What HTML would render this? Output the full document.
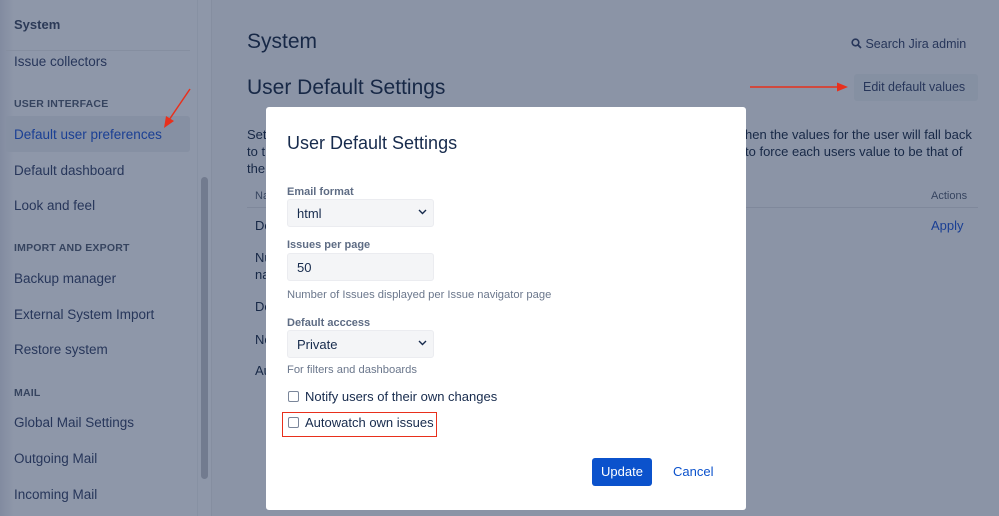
<!DOCTYPE html>
<html><head><meta charset="utf-8"><style>
*{box-sizing:border-box;margin:0;padding:0}
body{width:999px;height:516px;overflow:hidden;font-family:"Liberation Sans",sans-serif;background:#8b94a6;position:relative;color:#253858}
.side{position:absolute;left:0;top:0;width:212px;height:516px;background:linear-gradient(90deg,#828ba0 0,#8e97a9 14px,#8e97a9 100%);border-right:1px solid #858ea0}
.side .t{position:absolute;left:14px;font-size:13px;font-weight:bold;color:#2c3a57}
.side .i{position:absolute;left:14px;font-size:13.5px;color:#27365a}
.side .h{position:absolute;left:14px;font-size:10.5px;font-weight:bold;color:#36445f;letter-spacing:.2px}
.sel{position:absolute;left:6px;top:116px;width:184px;height:36px;background:#8690a3;border-radius:3px}
.abs{position:absolute}
.modal{position:absolute;left:266px;top:107px;width:480px;height:403px;background:#fff;border-radius:3px}
.lbl{position:absolute;left:21px;font-size:11px;font-weight:bold;color:#5e6c84}
.fld{position:absolute;left:21px;width:147px;height:28px;background:#f4f5f7;border:1px solid #ebecf0;border-radius:3px;font-size:13px;color:#172b4d;padding:6px 9px}
.help{position:absolute;left:21px;font-size:11.2px;color:#6b778c}
.cb{position:absolute;left:22px;width:11px;height:11px;border:1px solid #7a869a;border-radius:2px}
.cbt{position:absolute;left:39px;font-size:13px;color:#172b4d}
.chev{position:absolute;right:6px;top:9px}
</style></head><body>
<div class="side">
<div class="t" style="top:17px">System</div>
<div style="position:absolute;left:6px;top:50px;width:184px;border-top:1px solid #858ea0"></div>
<div class="i" style="top:54px">Issue collectors</div>
<div class="h" style="top:98px">USER INTERFACE</div>
<div class="sel"></div>
<div class="i" style="top:127px;color:#1a3f94">Default user preferences</div>
<div class="i" style="top:163px">Default dashboard</div>
<div class="i" style="top:198px">Look and feel</div>
<div class="h" style="top:242px">IMPORT AND EXPORT</div>
<div class="i" style="top:271px">Backup manager</div>
<div class="i" style="top:307px">External System Import</div>
<div class="i" style="top:342px">Restore system</div>
<div class="h" style="top:387px">MAIL</div>
<div class="i" style="top:415px">Global Mail Settings</div>
<div class="i" style="top:451px">Outgoing Mail</div>
<div class="i" style="top:487px">Incoming Mail</div>
<div style="position:absolute;left:197px;top:0;width:1px;height:516px;background:#8791a3"></div>
<div style="position:absolute;left:201px;top:177px;width:7px;height:302px;background:#727b8f;border-radius:4px"></div>
<svg style="position:absolute;left:160px;top:86px" width="34" height="44"><line x1="30" y1="3" x2="9" y2="34" stroke="#e8301c" stroke-width="1.5"/><polygon points="4,42 6,30 14,35" fill="#e8301c"/></svg>
</div>
<div class="abs" style="left:247px;top:30px;font-size:21px;color:#172846">System</div>
<div class="abs" style="left:851px;top:37px;font-size:12.5px;color:#27365a"><svg width="11" height="11" style="vertical-align:-1px"><circle cx="4.5" cy="4.5" r="3.3" fill="none" stroke="#27365a" stroke-width="1.6"/><line x1="7" y1="7" x2="10" y2="10" stroke="#27365a" stroke-width="1.8"/></svg> Search Jira admin</div>
<div class="abs" style="left:247px;top:76px;font-size:21px;color:#172846">User Default Settings</div>
<svg class="abs" style="left:750px;top:81px" width="100" height="12"><line x1="0" y1="6" x2="88" y2="6" stroke="#e8301c" stroke-width="1.5"/><polygon points="98,6 87,1.5 87,10.5" fill="#e8301c"/></svg>
<div class="abs" style="left:854px;top:74px;width:124px;height:27px;background:#8590a2;border-radius:3px;font-size:12.5px;color:#27365a;padding:6px 9px">Edit default values</div>
<div class="abs" style="left:247px;top:126px;font-size:13px;line-height:17px;color:#172846">Set<br>to t<br>the</div>
<div class="abs" style="left:745px;top:126px;font-size:13px;line-height:17px;color:#172846;white-space:nowrap">hen the values for the user will fall back<br>to force each users value to be that of</div>
<div class="abs" style="left:255px;top:190px;font-size:11px;color:#36445f">Na</div>
<div class="abs" style="left:931px;top:190px;font-size:11px;color:#36445f">Actions</div>
<div class="abs" style="left:247px;top:207px;width:731px;border-top:1px solid #7f889b"></div>
<div class="abs" style="left:931px;top:218px;font-size:13px;color:#1a3f94">Apply</div>
<div class="abs" style="left:255px;top:218px;font-size:13px;color:#172846">De</div>
<div class="abs" style="left:255px;top:249px;font-size:13px;line-height:17px;color:#172846">Nu<br>na</div>
<div class="abs" style="left:255px;top:299px;font-size:13px;color:#172846">De</div>
<div class="abs" style="left:255px;top:332px;font-size:13px;color:#172846">No</div>
<div class="abs" style="left:255px;top:363px;font-size:13px;color:#172846">Au</div>
<div class="modal">
<div class="abs" style="left:21px;top:26px;font-size:18px;color:#172b4d">User Default Settings</div>
<div class="lbl" style="top:79px">Email format</div>
<div class="fld" style="top:92px">html<svg class="chev" width="9" height="6"><path d="M1 1l3.5 3.5L8 1" fill="none" stroke="#172b4d" stroke-width="1.4"/></svg></div>
<div class="lbl" style="top:132px">Issues per page</div>
<div class="fld" style="top:146px">50</div>
<div class="help" style="top:182px">Number of Issues displayed per Issue navigator page</div>
<div class="lbl" style="top:210px">Default acccess</div>
<div class="fld" style="top:223px">Private<svg class="chev" width="9" height="6"><path d="M1 1l3.5 3.5L8 1" fill="none" stroke="#172b4d" stroke-width="1.4"/></svg></div>
<div class="help" style="top:257px">For filters and dashboards</div>
<div class="cb" style="top:284px"></div>
<div class="cbt" style="top:282px">Notify users of their own changes</div>
<div class="abs" style="left:16px;top:305px;width:155px;height:25px;border:1.5px solid #e8301c"></div>
<div class="cb" style="top:310px"></div>
<div class="cbt" style="top:308px">Autowatch own issues</div>
<div class="abs" style="left:326px;top:351px;width:60px;height:28px;background:#0b52cc;border-radius:3px;color:#fff;font-size:13px;text-align:center;line-height:28px">Update</div>
<div class="abs" style="left:407px;top:357px;font-size:13px;color:#0b52cc">Cancel</div>
</div>
</body></html>
